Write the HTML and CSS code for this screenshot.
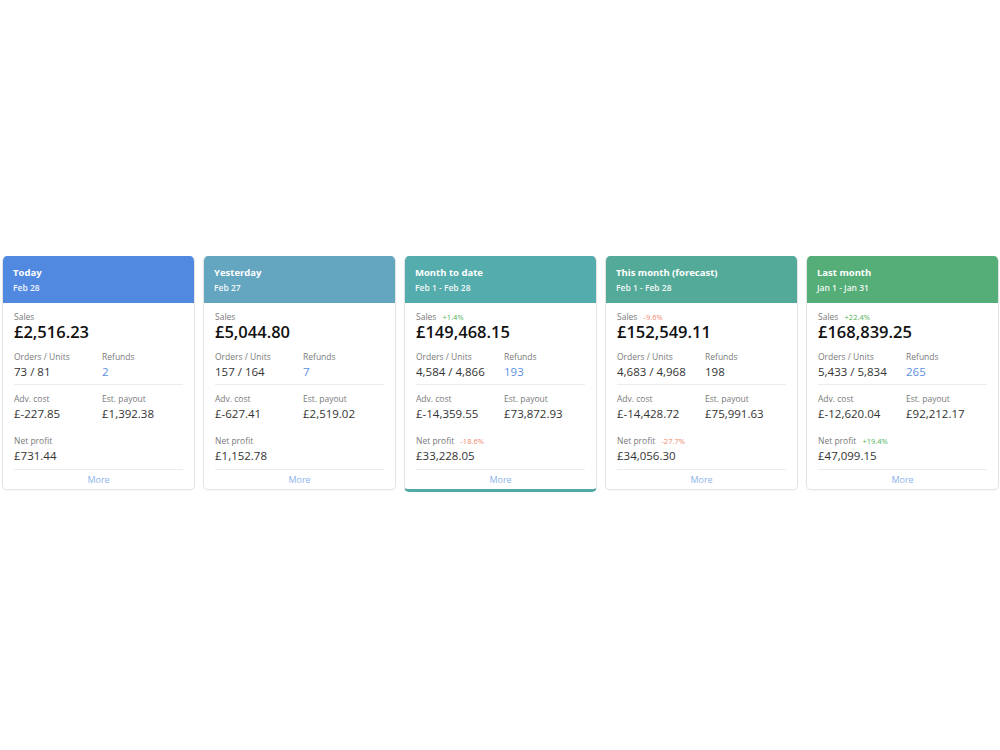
FILE: index.html
```html
<!DOCTYPE html>
<html lang="en">
<head>
    <meta charset="UTF-8">
    <meta name="viewport" content="width=device-width, initial-scale=1.0">
    <title>Sales overview</title>
    <link rel="stylesheet" href="styles.css">
</head>
<body>
    <div class="tiles">
        <div class="tile">
            <div class="tile-head today">
                <div class="tile-title">Today</div>
                <div class="tile-date">Feb 28</div>
            </div>
            <div class="tile-body">
                <div class="label">Sales</div>
                <div class="value big">£2,516.23</div>
                <div class="pair">
                    <div><div class="label">Orders / Units</div><div class="value">73 / 81</div></div>
                    <div><div class="label">Refunds</div><div class="value link">2</div></div>
                </div>
                <div class="pair divided">
                    <div><div class="label">Adv. cost</div><div class="value">£-227.85</div></div>
                    <div><div class="label">Est. payout</div><div class="value">£1,392.38</div></div>
                </div>
                <div class="net">
                    <div class="label">Net profit</div>
                    <div class="value">£731.44</div>
                </div>
            </div>
            <a class="tile-more" href="#">More</a>
        </div>

        <div class="tile">
            <div class="tile-head yesterday">
                <div class="tile-title">Yesterday</div>
                <div class="tile-date">Feb 27</div>
            </div>
            <div class="tile-body">
                <div class="label">Sales</div>
                <div class="value big">£5,044.80</div>
                <div class="pair">
                    <div><div class="label">Orders / Units</div><div class="value">157 / 164</div></div>
                    <div><div class="label">Refunds</div><div class="value link">7</div></div>
                </div>
                <div class="pair divided">
                    <div><div class="label">Adv. cost</div><div class="value">£-627.41</div></div>
                    <div><div class="label">Est. payout</div><div class="value">£2,519.02</div></div>
                </div>
                <div class="net">
                    <div class="label">Net profit</div>
                    <div class="value">£1,152.78</div>
                </div>
            </div>
            <a class="tile-more" href="#">More</a>
        </div>

        <div class="tile active">
            <div class="tile-head mtd">
                <div class="tile-title">Month to date</div>
                <div class="tile-date">Feb 1 - Feb 28</div>
            </div>
            <div class="tile-body">
                <div class="label">Sales <span class="delta up">+1.4%</span></div>
                <div class="value big">£149,468.15</div>
                <div class="pair">
                    <div><div class="label">Orders / Units</div><div class="value">4,584 / 4,866</div></div>
                    <div><div class="label">Refunds</div><div class="value link">193</div></div>
                </div>
                <div class="pair divided">
                    <div><div class="label">Adv. cost</div><div class="value">£-14,359.55</div></div>
                    <div><div class="label">Est. payout</div><div class="value">£73,872.93</div></div>
                </div>
                <div class="net">
                    <div class="label">Net profit <span class="delta down">-18.6%</span></div>
                    <div class="value">£33,228.05</div>
                </div>
            </div>
            <a class="tile-more" href="#">More</a>
        </div>

        <div class="tile">
            <div class="tile-head forecast">
                <div class="tile-title">This month (forecast)</div>
                <div class="tile-date">Feb 1 - Feb 28</div>
            </div>
            <div class="tile-body">
                <div class="label">Sales <span class="delta down">-9.6%</span></div>
                <div class="value big">£152,549.11</div>
                <div class="pair">
                    <div><div class="label">Orders / Units</div><div class="value">4,683 / 4,968</div></div>
                    <div><div class="label">Refunds</div><div class="value">198</div></div>
                </div>
                <div class="pair divided">
                    <div><div class="label">Adv. cost</div><div class="value">£-14,428.72</div></div>
                    <div><div class="label">Est. payout</div><div class="value">£75,991.63</div></div>
                </div>
                <div class="net">
                    <div class="label">Net profit <span class="delta down">-27.7%</span></div>
                    <div class="value">£34,056.30</div>
                </div>
            </div>
            <a class="tile-more" href="#">More</a>
        </div>

        <div class="tile">
            <div class="tile-head last-month">
                <div class="tile-title">Last month</div>
                <div class="tile-date">Jan 1 - Jan 31</div>
            </div>
            <div class="tile-body">
                <div class="label">Sales <span class="delta up">+22.4%</span></div>
                <div class="value big">£168,839.25</div>
                <div class="pair">
                    <div><div class="label">Orders / Units</div><div class="value">5,433 / 5,834</div></div>
                    <div><div class="label">Refunds</div><div class="value link">265</div></div>
                </div>
                <div class="pair divided">
                    <div><div class="label">Adv. cost</div><div class="value">£-12,620.04</div></div>
                    <div><div class="label">Est. payout</div><div class="value">£92,212.17</div></div>
                </div>
                <div class="net">
                    <div class="label">Net profit <span class="delta up">+19.4%</span></div>
                    <div class="value">£47,099.15</div>
                </div>
            </div>
            <a class="tile-more" href="#">More</a>
        </div>
    </div>
</body>
</html>
```

FILE: styles.css
```css
body {
    margin: 0;
    padding-top: 256px;
    background: #fff;
    font-family: "Open Sans", "Liberation Sans", sans-serif;
    color: #333;
}

.tiles {
    display: flex;
    align-items: flex-start;
    gap: 8px;
    padding: 0 1px 0 2px;
}

.tile {
    flex: 1;
    min-width: 0;
    display: flex;
    flex-direction: column;
    background: #fff;
    border: 1px solid #e4e4e4;
    border-top: none;
    border-radius: 5px;
    box-shadow: 0 1px 2px rgba(0, 0, 0, 0.04);
    overflow: hidden;
}

.tile.active {
    border-bottom: 3px solid #52a8a6;
}

/* coloured header strip */
.tile-head {
    padding: 9px 11px 8px;
    margin: 0 -1px;
    color: #fff;
}

.tile-title {
    font-size: 9.5px;
    font-weight: 700;
    line-height: 16px;
}

.tile-date {
    font-size: 8.5px;
    font-weight: 600;
    line-height: 14px;
    opacity: 0.92;
}

.today { background: #5189e1; }
.yesterday { background: #64a6c0; }
.mtd { background: #54acac; }
.forecast { background: #54aa98; }
.last-month { background: #55ae77; }

.tile-body {
    padding: 8px 11px 5px;
}

.label {
    font-size: 8.5px;
    line-height: 12px;
    color: #7a7a7a;
}

.value {
    font-size: 11.5px;
    line-height: 17px;
    color: #333;
}

.value.big {
    font-size: 16.5px;
    font-weight: 600;
    line-height: 18px;
    color: #111;
}

.value.link {
    color: #5b90e2;
}

.delta {
    margin-left: 4px;
    font-size: 7.5px;
}

.delta.up { color: #52b15a; }
.delta.down { color: #f0866c; }

.pair {
    display: grid;
    grid-template-columns: 88px 1fr;
    margin-top: 10px;
    padding-bottom: 4px;
}

.pair.divided {
    margin-top: 0;
    padding-top: 8px;
    padding-bottom: 0;
    border-top: 1px solid #ececec;
}

.net {
    margin-top: 13px;
}

.tile-more {
    display: block;
    margin: 0 11px;
    border-top: 1px solid #ececec;
    font-size: 9px;
    line-height: 19px;
    text-align: center;
    color: #8db3ea;
    text-decoration: none;
}
```
